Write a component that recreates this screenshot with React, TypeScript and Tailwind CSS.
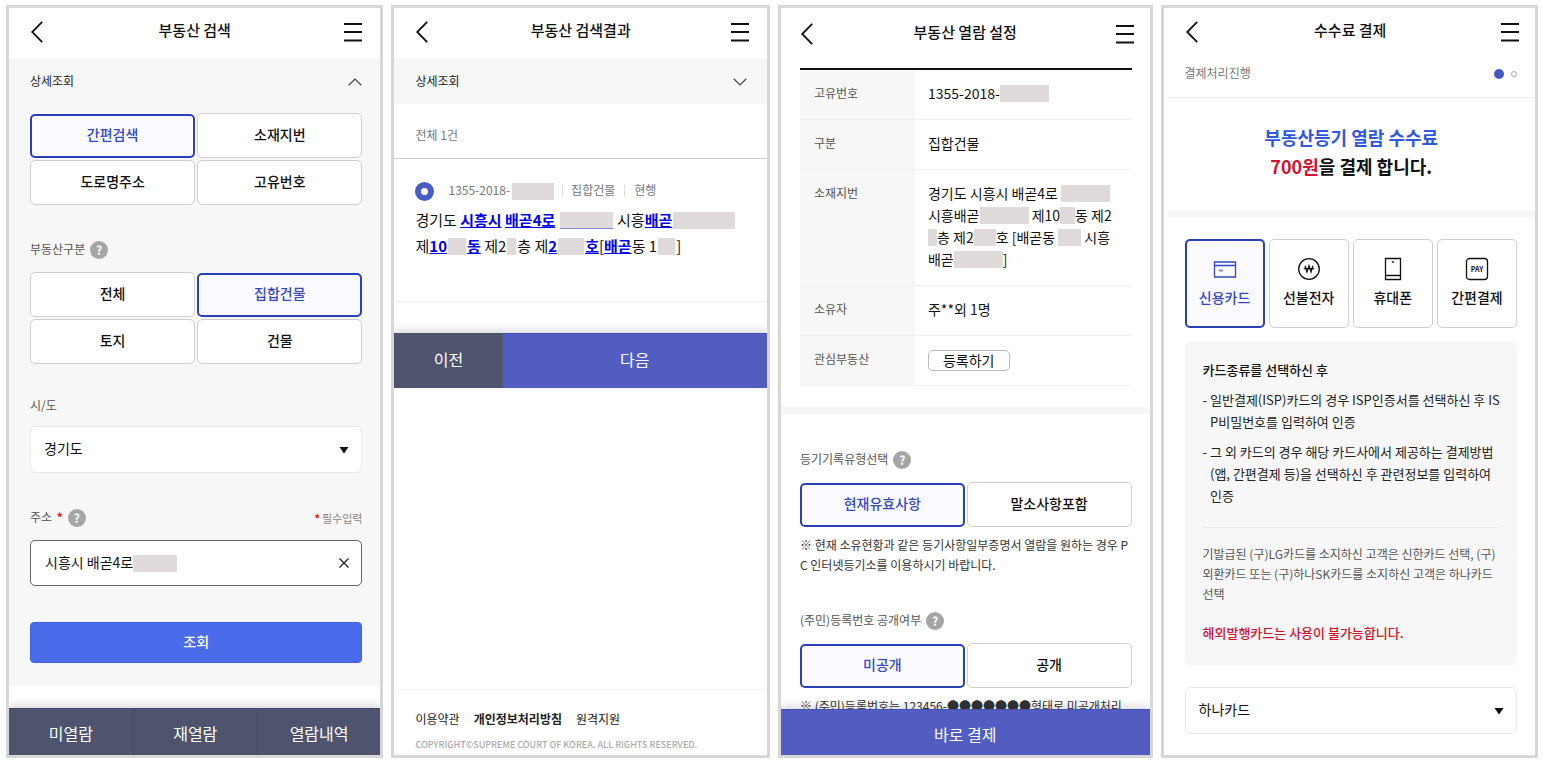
import { useState } from 'react'
import type { ReactNode } from 'react'
import clsx from 'clsx'

const Header = ({ title, className }: { title: string; className: string }) => (
  <header className={clsx('flex shrink-0 items-center justify-between', className)}>
    <button type="button" aria-label="뒤로" className="p-0.5">
      <svg className="h-[22px] w-3" viewBox="0 0 12 22" fill="none" stroke="#111" strokeWidth="1.8">
        <path d="M11.2 0.8L1.2 11l10 10.2" />
      </svg>
    </button>
    <h1 className="pb-1 text-[15px] leading-5 font-medium text-[#111]">{title}</h1>
    <button type="button" aria-label="메뉴">
      <svg className="h-5 w-[18px]" viewBox="0 0 18 20" fill="none" stroke="#111" strokeWidth="2">
        <path d="M0 2h18M0 10h18M0 18.5h18" />
      </svg>
    </button>
  </header>
)

const Phone = ({ children }: { children: ReactNode }) => (
  <section className="flex min-w-0 flex-col overflow-hidden border-[3px] border-[#d7d7d7] bg-white">{children}</section>
)

const Chevron = ({ up = false }: { up?: boolean }) => (
  <svg className={clsx('h-2 w-3.5', up && 'rotate-180')} viewBox="0 0 14 8" fill="none" stroke="#444" strokeWidth="1.2">
    <path d="M0.7 0.8L7 7l6.3-6.2" />
  </svg>
)

// 개인정보 가림 처리
const Mask = ({ className }: { className: string }) => (
  <span className={clsx('inline-block h-[17px] shrink-0 bg-[#e0dadb] align-[-3px]', className)} />
)

const Help = () => (
  <button type="button" aria-label="도움말" className="flex size-[18px] items-center justify-center rounded-full bg-[#a5a5a5] text-xs leading-none font-bold text-white">
    ?
  </button>
)

const Required = () => <span className="mx-0.5 font-bold text-[#e01010]">*</span>

const OptionGroup = ({ label, options, initial }: { label: string; options: string[]; initial: string }) => {
  const [selected, setSelected] = useState(initial)

  return (
    <div role="group" aria-label={label} className="grid grid-cols-2 gap-0.5">
      {options.map((option) => (
        <button
          key={option}
          type="button"
          aria-pressed={option === selected}
          onClick={() => setSelected(option)}
          className={clsx(
            'rounded-[5px] pb-1 text-sm font-medium',
            option === selected
              ? 'mt-px h-11 border-2 border-[#2a40b8] bg-[#fafaff] text-[#3349bd]'
              : 'h-[45px] border border-[#cfcfcf] bg-white text-[#111]',
          )}
        >
          {option}
        </button>
      ))}
    </div>
  )
}

const SelectBox = ({ id, label, value, options }: { id: string; label?: string; value: string; options: string[] }) => (
  <div className="relative">
    <select
      id={id}
      aria-label={label}
      defaultValue={value}
      className="h-[47px] w-full appearance-none rounded-[5px] border border-[#e9e9e9] bg-white px-[13px] pb-1 text-sm text-[#111]"
    >
      {options.map((option) => (
        <option key={option}>{option}</option>
      ))}
    </select>
    <svg className="pointer-events-none absolute top-5 right-[13px] h-2 w-2.5" viewBox="0 0 10 8" fill="#111">
      <path d="M0.5 1h9L5 7.5z" />
    </svg>
  </div>
)

const SearchScreen = () => (
  <Phone>
    <Header title="부동산 검색" className="h-[51px] pr-[18px] pb-1 pl-5" />
    <div className="min-h-0 flex-1 overflow-hidden">
      <div className="bg-[#f7f7f7] pr-[18px] pb-[23px] pl-[21px]">
        <button type="button" className="flex h-[45px] w-full items-center justify-between text-xs text-[#222]">
          <span className="pb-0.5">상세조회</span>
          <Chevron up />
        </button>
        <div className="pt-[9px]">
          <OptionGroup label="검색방법" options={['간편검색', '소재지번', '도로명주소', '고유번호']} initial="간편검색" />
        </div>
        <div className="mt-9 mb-[13px] flex h-[18px] items-center gap-[5px] text-xs text-[#555]">
          <span className="pb-0.5">부동산구분</span>
          <Help />
        </div>
        <OptionGroup label="부동산구분" options={['전체', '집합건물', '토지', '건물']} initial="집합건물" />
        <label htmlFor="sido" className="mt-8 mb-3 block h-[18px] text-xs leading-[18px] text-[#555]">
          시/도
        </label>
        <SelectBox id="sido" value="경기도" options={['경기도', '서울특별시', '인천광역시']} />
        <div className="mt-9 mb-[13px] flex h-[18px] items-center text-xs text-[#555]">
          <label htmlFor="address" className="pb-0.5">
            주소 <Required />
          </label>
          <span className="ml-[3px] flex">
            <Help />
          </span>
          <span className="ml-auto text-[11px] text-[#888]">
            <Required />필수입력
          </span>
        </div>
        <div className="flex h-[46px] items-center rounded-[5px] border border-[#666] bg-white pr-3 pl-3.5">
          <input id="address" type="text" defaultValue="시흥시 배곧4로" className="field-sizing-content min-w-0 pb-0.5 text-sm text-[#111] outline-none" />
          <Mask className="w-11" />
          <button type="button" aria-label="지우기" className="ml-auto">
            <svg className="size-2.5" viewBox="0 0 10 10" fill="none" stroke="#222" strokeWidth="1.3">
              <path d="M0.5 0.5l9 9M9.5 0.5l-9 9" />
            </svg>
          </button>
        </div>
        <button type="submit" className="mt-9 h-[41px] w-full rounded-[4px] border border-[#3f60e6] bg-[#4a6bea] pb-1 text-sm font-medium text-white">
          조회
        </button>
      </div>
    </div>
    <nav className="relative grid h-[47px] shrink-0 grid-cols-3 border-t border-[#40466a] bg-[#4e546d] shadow-[0_-3px_8px_rgba(0,0,0,0.15)]">
      {['미열람', '재열람', '열람내역'].map((tab) => (
        <a key={tab} href="#" className="flex items-center justify-center border-l border-[#474d66] pt-0.5 text-base text-white first:border-l-0">
          {tab}
        </a>
      ))}
    </nav>
  </Phone>
)

const Keyword = ({ children }: { children: ReactNode }) => <b className="font-bold text-[#0000ee] underline">{children}</b>

const ResultScreen = () => (
  <Phone>
    <Header title="부동산 검색결과" className="h-[51px] pr-[18px] pb-1 pl-5" />
    <button type="button" className="flex h-[45px] shrink-0 items-center justify-between bg-[#f7f7f7] pr-5 pl-[21px] text-xs text-[#222]">
      <span className="pb-0.5">상세조회</span>
      <Chevron />
    </button>
    <p className="h-[55px] shrink-0 border-b border-[#d0d0d0] px-[21px] pt-[21px] text-xs leading-5 text-[#777]">전체 1건</p>
    <div className="h-[143px] shrink-0 border-b border-[#f0f0f0] pt-[22px] pl-[21px]">
      <label className="flex h-5 items-center text-xs text-[#777]">
        <input
          type="radio"
          name="estate"
          defaultChecked
          className="mr-3.5 size-[19px] appearance-none rounded-full border-[6px] border-[#4a5cc6] bg-white"
        />
        <span className="pb-0.5">1355-2018-</span>
        <Mask className="ml-0.5 w-[42px]" />
        <i className="mx-2 h-3 w-px bg-[#ddd]" />
        <span className="pb-0.5">집합건물</span>
        <i className="mx-[9px] h-3 w-px bg-[#ddd]" />
        <span className="pb-0.5">현행</span>
      </label>
      <p className="mt-1.5 text-[15px] leading-[26px] whitespace-nowrap text-[#111]">
        경기도 <Keyword>시흥시</Keyword> <Keyword>배곧4로</Keyword>{' '}
        <Mask className="mx-px w-[53px] border-b border-[#8088dc]" /> 시흥<Keyword>배곧</Keyword>
        <Mask className="mx-px w-[62px]" />
        <br />
        제<Keyword>10</Keyword>
        <Mask className="mx-px w-[18px]" />
        <Keyword>동</Keyword> 제2
        <Mask className="mx-px w-[9px]" />층 제<Keyword>2</Keyword>
        <Mask className="mx-px w-[26px]" />
        <Keyword>호</Keyword>[<Keyword>배곧</Keyword>동 1
        <Mask className="mx-px w-[17px]" />]
      </p>
    </div>
    <div className="mt-[31px] flex h-[55px] shrink-0 text-base text-white shadow-[0_-3px_8px_rgba(0,0,0,0.15)]">
      <button type="button" className="w-[29%] bg-[#4e546d] pb-1">이전</button>
      <button type="button" className="flex-1 border-t border-[#4450b4] bg-[#525dc2] pb-1">다음</button>
    </div>
    <footer className="mt-auto h-[66px] shrink-0 border-t border-[#f4f4f4] pt-[19px] pl-[21px]">
      <nav className="flex gap-3.5 text-xs leading-5 text-[#222]">
        <a href="#">이용약관</a>
        <a href="#" className="font-bold">개인정보처리방침</a>
        <a href="#">원격지원</a>
      </nav>
      <p className="pt-2.5 text-[9px] leading-3 font-medium whitespace-nowrap text-[#aaa]">COPYRIGHT©SUPREME COURT OF KOREA. ALL RIGHTS RESERVED.</p>
    </footer>
  </Phone>
)

const Row = ({ label, children }: { label: string; children: ReactNode }) => (
  <tr className="border-b border-[#f0f0f0] align-top">
    <th scope="row" className="w-[115px] bg-[#f7f7f7] px-3.5 pt-3 pb-[15px] text-left text-xs leading-[22px] font-normal text-[#555]">
      {label}
    </th>
    <td className="pt-3 pb-[15px] pl-[13px] text-sm leading-[22px] whitespace-nowrap text-[#111]">{children}</td>
  </tr>
)

const SettingScreen = () => (
  <Phone>
    <Header title="부동산 열람 설정" className="h-[60px] pr-4 pb-[9px] pl-[18px]" />
    <div className="min-h-0 flex-1 overflow-hidden">
      <div className="pr-[18px] pb-[21px] pl-[19px]">
        <table className="w-full border-collapse border-t-2 border-[#111]">
          <tbody>
            <Row label="고유번호">
              1355-2018-
              <Mask className="w-[49px]" />
            </Row>
            <Row label="구분">집합건물</Row>
            <Row label="소재지번">
              경기도 시흥시 배곧4로 <Mask className="w-[49px]" />
              <br />
              시흥배곧
              <Mask className="w-[49px]" /> 제10
              <Mask className="w-[15px]" />동 제2
              <br />
              <Mask className="w-[9px]" />층 제2
              <Mask className="w-[22px]" />호 [배곧동 <Mask className="w-[23px]" /> 시흥
              <br />
              배곧
              <Mask className="w-[49px]" />]
            </Row>
            <Row label="소유자">주**외 1명</Row>
            <Row label="관심부동산">
              <button type="button" className="mt-0.5 -mb-px block h-[21px] rounded-[5px] border border-[#bbb] px-3.5 text-sm leading-[17px]">
                등록하기
              </button>
            </Row>
          </tbody>
        </table>
      </div>
      <div className="h-[7px] bg-[#f6f6f6]" />
      <div className="pt-[37px] pr-[18px] pl-[19px]">
        <div className="mb-[13px] flex h-[18px] items-center gap-[5px] text-xs text-[#555]">
          <span className="pb-0.5">등기기록유형선택</span>
          <Help />
        </div>
        <OptionGroup label="등기기록유형선택" options={['현재유효사항', '말소사항포함']} initial="현재유효사항" />
        <p className="pt-2 text-xs leading-5 whitespace-nowrap text-[#333]">
          ※ 현재 소유현황과 같은 등기사항일부증명서 열람을 원하는 경우 P
          <br />
          C 인터넷등기소를 이용하시기 바랍니다.
        </p>
        <div className="mt-[37px] mb-[13px] flex h-[18px] items-center gap-[5px] text-xs text-[#555]">
          <span className="pb-0.5">(주민)등록번호 공개여부</span>
          <Help />
        </div>
        <OptionGroup label="(주민)등록번호 공개여부" options={['미공개', '공개']} initial="미공개" />
        <p className="pt-2 text-xs leading-5 whitespace-nowrap text-[#333]">※ (주민)등록번호는 123456-●●●●●●●형태로 미공개처리</p>
      </div>
    </div>
    <button type="button" className="relative h-[46px] shrink-0 border-t border-[#4450b4] bg-[#525dc2] pt-0.5 text-base text-white shadow-[0_-3px_8px_rgba(0,0,0,0.15)]">
      바로 결제
    </button>
  </Phone>
)

const payMethods = [
  {
    name: '신용카드',
    icon: (
      <>
        <path d="M1.5 5h21v15h-21zM1.5 8.5h21" />
        <path d="M6 13.5h4" strokeWidth="1.8" opacity="0.7" />
      </>
    ),
  },
  {
    name: '선불전자',
    icon: (
      <>
        <circle cx="12" cy="12" r="10.3" />
        <path d="M8 8.8l2 6.2 2-6.2 2 6.2 2-6.2M6.8 11.6h10.4" />
      </>
    ),
  },
  {
    name: '휴대폰',
    icon: (
      <>
        <path d="M4.5 1.5h15v21h-15zM4.5 18.5h15" />
        <path d="M10.8 5h2.4" />
      </>
    ),
  },
  {
    name: '간편결제',
    icon: (
      <>
        <rect x="1.5" y="1.5" width="21" height="21" rx="3" />
        <text x="12" y="15" textAnchor="middle" fontSize="7" fontWeight="700" fill="currentColor" stroke="none">
          PAY
        </text>
      </>
    ),
  },
]

const PaymentScreen = () => {
  const [method, setMethod] = useState('신용카드')

  return (
    <Phone>
      <Header title="수수료 결제" className="h-[47px] pr-4 pl-5" />
      <div className="ml-1 flex h-[43px] shrink-0 items-center border-b border-[#ebebeb] pr-[17px] pb-1 pl-[17px] text-xs text-[#777]">
        <span className="pb-0.5">결제처리진행</span>
        <span className="ml-auto size-2.5 rounded-full bg-[#4558c4]" />
        <span className="mr-px ml-[7px] size-1.5 rounded-full border border-[#aaa]" />
      </div>
      <p className="ml-1 h-[119px] shrink-0 border-b-[6px] border-[#f7f7f7] pt-[25px] text-center text-lg leading-[29px] font-bold text-[#111]">
        <span className="text-[#2f58e0]">부동산등기 열람 수수료</span>
        <br />
        <span className="text-[#d3102f]">700원</span>을 결제 합니다.
      </p>
      <div className="pt-[22px] pr-[18px] pl-[21px]">
        <div role="group" aria-label="결제수단" className="grid grid-cols-4 gap-1">
          {payMethods.map(({ name, icon }) => (
            <button
              key={name}
              type="button"
              aria-pressed={name === method}
              onClick={() => setMethod(name)}
              className={clsx(
                'flex h-[89px] flex-col items-center justify-center gap-1.5 rounded-[5px] pb-[3px] text-sm leading-5 font-medium',
                name === method ? 'border-2 border-[#2a40b8] bg-[#fafaff] text-[#3349bd]' : 'border border-[#cfcfcf] text-[#111]',
              )}
            >
              <svg className="size-6" viewBox="0 0 24 24" fill="none" stroke="currentColor" strokeWidth="1.3">
                {icon}
              </svg>
              {name}
            </button>
          ))}
        </div>
        <div className="mt-3.5 rounded-[5px] bg-[#f7f7f7] px-[18px] pt-[17px] pb-[21px] whitespace-nowrap">
          <h2 className="text-[13px] leading-[22px] font-medium text-[#111]">카드종류를 선택하신 후</h2>
          <ul className="text-[13px] leading-[22px] text-[#222]">
            <li className="mt-2 flex gap-[3px]">
              <span>-</span>
              <span>
                일반결제(ISP)카드의 경우 ISP인증서를 선택하신 후 IS
                <br />
                P비밀번호를 입력하여 인증
              </span>
            </li>
            <li className="mt-2 flex gap-[3px]">
              <span>-</span>
              <span>
                그 외 카드의 경우 해당 카드사에서 제공하는 결제방법
                <br />
                (앱, 간편결제 등)을 선택하신 후 관련정보를 입력하여
                <br />
                인증
              </span>
            </li>
          </ul>
          <p className="mt-5 border-t border-[#ebebeb] pt-4 text-xs leading-5 text-[#555]">
            기발급된 (구)LG카드를 소지하신 고객은 신한카드 선택, (구)
            <br />
            외환카드 또는 (구)하나SK카드를 소지하신 고객은 하나카드
            <br />
            선택
          </p>
          <p className="pt-[18px] text-[13px] leading-[22px] font-medium text-[#d3102f]">해외발행카드는 사용이 불가능합니다.</p>
        </div>
        <div className="pt-[22px]">
          <SelectBox id="card" label="카드종류" value="하나카드" options={['하나카드', '신한카드', '국민카드']} />
        </div>
      </div>
    </Phone>
  )
}

const App = () => (
  <main className="grid h-screen grid-cols-[378fr_379fr_375fr_378fr] gap-2 bg-white pt-[5px] pr-2 pb-1.5 pl-1.5 font-['Noto_Sans_CJK_KR',sans-serif]">
    <SearchScreen />
    <ResultScreen />
    <SettingScreen />
    <PaymentScreen />
  </main>
)

export default App
